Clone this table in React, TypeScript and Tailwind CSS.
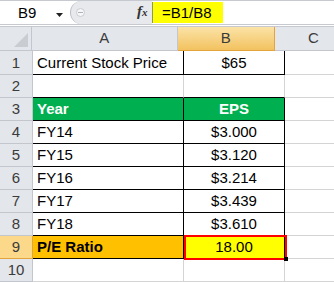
import React from "react";

type Cell = {
  text?: string;
  bg?: string;
  bold?: boolean;
  white?: boolean;
  center?: boolean;
  right?: string;
  bottom?: string;
};

const G = "#d4d4d4";
const K = "#000000";

const rows: { h: number; cells: Cell[] }[] = [
  { h: 24, cells: [{ text: "Current Stock Price", right: K, bottom: K }, { text: "$65", center: true, right: K, bottom: K }, {}] },
  { h: 23, cells: [{ bottom: K }, { bottom: K }, {}] },
  { h: 23, cells: [{ text: "Year", bg: "#00b050", bold: true, white: true, right: K, bottom: K }, { text: "EPS", bg: "#00b050", bold: true, white: true, center: true, right: K, bottom: K }, {}] },
  { h: 23, cells: [{ text: "FY14", right: K, bottom: K }, { text: "$3.000", center: true, right: K, bottom: K }, {}] },
  { h: 23, cells: [{ text: "FY15", right: K, bottom: K }, { text: "$3.120", center: true, right: K, bottom: K }, {}] },
  { h: 23, cells: [{ text: "FY16", right: K, bottom: K }, { text: "$3.214", center: true, right: K, bottom: K }, {}] },
  { h: 23, cells: [{ text: "FY17", right: K, bottom: K }, { text: "$3.439", center: true, right: K, bottom: K }, {}] },
  { h: 23, cells: [{ text: "FY18", right: K, bottom: K }, { text: "$3.610", center: true, right: K, bottom: K }, {}] },
  { h: 23, cells: [{ text: "P/E Ratio", bg: "#ffc000", bold: true, right: K, bottom: K }, { text: "18.00", bg: "#ffff00", center: true, right: K, bottom: K }, {}] },
  { h: 23, cells: [{}, {}, {}] },
];

const widths = [151, 101, 60];

export default function App() {
  return (
    <div
      className="w-[334px] h-[282px] overflow-hidden bg-white relative text-[15px] text-black"
      style={{ fontFamily: '"Liberation Sans", Arial, sans-serif' }}
    >
      {/* Formula bar */}
      <div className="h-[25px] flex border-t border-b border-[#c6cad0] bg-white">
        <div className="w-[70px] flex items-center relative">
          <span className="ml-[18px] text-[15px] leading-none">B9</span>
          <svg className="absolute left-[56px] top-[12px]" width="7" height="4" viewBox="0 0 7 4">
            <path d="M0 0 L7 0 L3.5 4 Z" fill="#222" />
          </svg>
        </div>
        <div className="w-[82px] h-[23px] bg-[#e7e9ec] rounded-l-[12px] border-l border-[#b9bdc3] flex items-center relative">
          <div className="absolute left-[5px] top-[7px] w-[9px] h-[9px] rounded-full bg-[#f6f7f8] border border-[#c9ccd0]">
            <div className="absolute left-[1px] top-[3px] w-[5px] h-[1px] bg-[#aeb2b7]" />
          </div>
          <span
            className="absolute left-[66px] top-[3px] italic font-bold text-[15px] leading-none text-[#333]"
            style={{ fontFamily: '"Liberation Serif", "Times New Roman", serif' }}
          >
            f<span className="text-[11px]">x</span>
          </span>
        </div>
        <div className="w-[71px] h-[21px] mt-[1px] bg-[#ffff00] border-l border-[#8a9a5b] flex items-center">
          <span className="ml-[9px] leading-none">=B1/B8</span>
        </div>
        <div className="flex-1" />
      </div>
      <div className="h-[2px] border-b border-[#c6cad0]" />

      {/* Column header row */}
      <div className="flex h-[24px]">
        <div className="w-[33px] relative bg-[#e3e6ea] border-r border-b border-[#c3c7cd]">
          <svg className="absolute right-[3px] bottom-[3px]" width="14" height="14" viewBox="0 0 14 14">
            <path d="M14 0 L14 14 L0 14 Z" fill="#c9ccd1" />
          </svg>
        </div>
        <div className="w-[151px] bg-[#e3e6ea] border-r border-b border-[#c3c7cd] flex items-center justify-center text-[#3b3b3b]">A</div>
        <div className="w-[101px] bg-gradient-to-b from-[#fbe3a6] to-[#f2c25e] border-r border-b border-[#e3a43c] flex items-center justify-center text-[#3b3b3b]">B</div>
        <div className="w-[60px] bg-[#e3e6ea] border-b border-[#c3c7cd] flex items-center pl-[33px] text-[#3b3b3b]">C</div>
      </div>

      {/* Rows */}
      {rows.map((r, i) => (
        <div key={i} className="flex" style={{ height: r.h }}>
          <div
            className={`w-[33px] shrink-0 border-r border-b flex items-end justify-center pb-[2px] text-[#3b3b3b] ${
              i === 8 ? "bg-[#fcd98a] border-[#e3a43c]" : "bg-[#e3e6ea] border-[#c3c7cd]"
            }`}
          >
            <span className="leading-[18px]">{i + 1}</span>
          </div>
          {r.cells.map((c, j) => (
            <div
              key={j}
              className={`shrink-0 flex items-end pb-[2px] ${c.center ? "justify-center" : "pl-[4px]"} ${
                c.bold ? "font-bold" : ""
              } ${c.white ? "text-white" : "text-black"}`}
              style={{
                width: widths[j],
                background: c.bg ?? "#ffffff",
                borderRight: j < 2 ? `1px solid ${c.right ?? G}` : undefined,
                borderBottom: `1px solid ${c.bottom ?? G}`,
              }}
            >
              <span className="leading-[18px] whitespace-nowrap">{c.text ?? ""}</span>
            </div>
          ))}
        </div>
      ))}

      {/* Selection box on B9 */}
      <div className="absolute left-[184px] top-[235px] w-[103px] h-[25px] border-2 border-[#ff0000]" />
      <div className="absolute left-[284px] top-[257px] w-[4px] h-[4px] bg-black" />
    </div>
  );
}
